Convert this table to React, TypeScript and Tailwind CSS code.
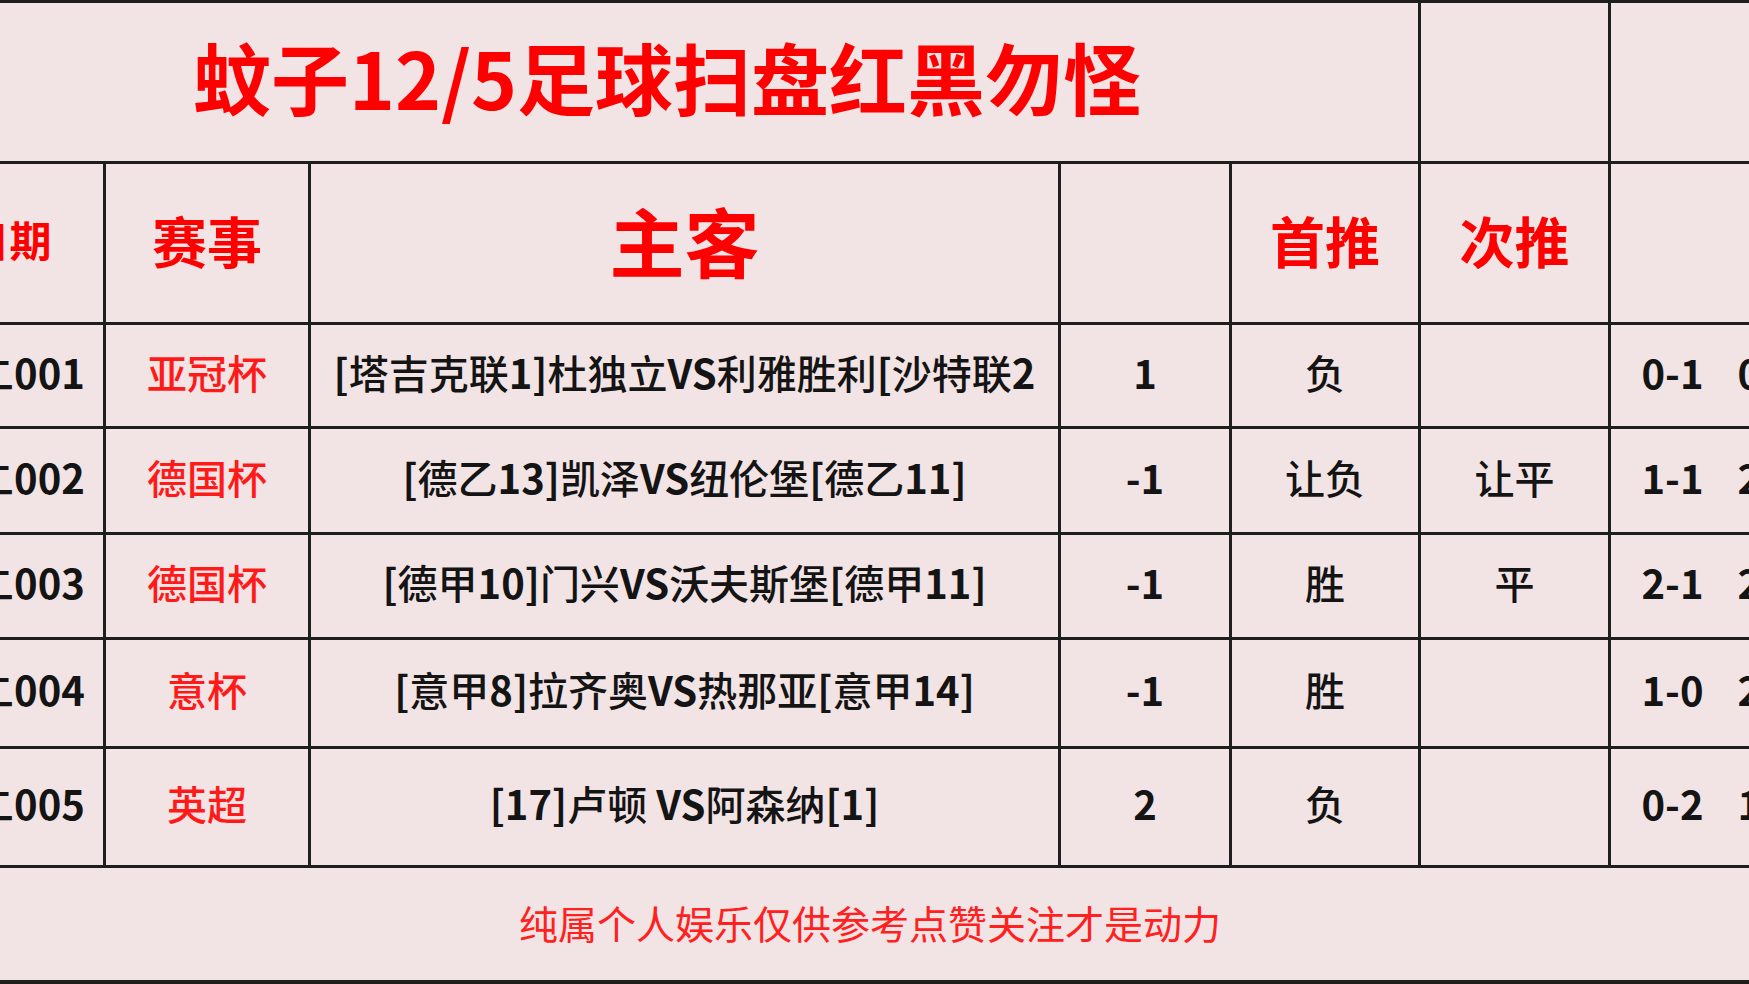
import React from "react";

function Mixed({ text }: { text: string }) {
  const parts = text.split(/([\x00-\x7F]+)/).filter((p) => p.length > 0);
  return (
    <span className="whitespace-pre">
      {parts.map((p, i) =>
        /^[\x00-\x7F]+$/.test(p) ? (
          <span key={i} className="font-bold">
            {p}
          </span>
        ) : (
          <span key={i} className="font-medium">
            {p}
          </span>
        )
      )}
    </span>
  );
}

type Row = {
  id: string;
  league: string;
  teams: string;
  hc: string;
  first: string;
  second: string;
  s1: string;
  s2: string;
  h: string;
};

const rows: Row[] = [
  { id: "周二001", league: "亚冠杯", teams: "[塔吉克联1]杜独立VS利雅胜利[沙特联2", hc: "1", first: "负", second: "", s1: "0-1", s2: "0-2", h: "h-[104px]" },
  { id: "周二002", league: "德国杯", teams: "[德乙13]凯泽VS纽伦堡[德乙11]", hc: "-1", first: "让负", second: "让平", s1: "1-1", s2: "2-2", h: "h-[106px]" },
  { id: "周二003", league: "德国杯", teams: "[德甲10]门兴VS沃夫斯堡[德甲11]", hc: "-1", first: "胜", second: "平", s1: "2-1", s2: "2-0", h: "h-[105px]" },
  { id: "周二004", league: "意杯", teams: "[意甲8]拉齐奥VS热那亚[意甲14]", hc: "-1", first: "胜", second: "", s1: "1-0", s2: "2-0", h: "h-[109px]" },
  { id: "周二005", league: "英超", teams: "[17]卢顿 VS阿森纳[1]", hc: "2", first: "负", second: "", s1: "0-2", s2: "1-3", h: "h-[119px]" },
];

const cell = "flex items-center justify-center border-r-[3px] border-[#1e1e1e] shrink-0 whitespace-nowrap overflow-hidden pb-[8px]";

export default function App() {
  return (
    <div
      className="w-[1749px] h-[984px] overflow-hidden bg-[#f2e3e4]"
      style={{ fontFamily: '"Noto Sans CJK SC", "Noto Sans", sans-serif' }}
    >
      <div className="-ml-[84px] w-[1914px] flex flex-col border-t-[3px] border-[#1e1e1e]">
        {/* Title row */}
        <div className="flex h-[161px] border-b-[3px] border-[#1e1e1e]">
          <div className={`${cell} w-[1505px] text-[78px] font-bold text-[#ff0000] leading-none !pb-[12px]`}>
            蚊子12/5足球扫盘红黑勿怪
          </div>
          <div className={`${cell} w-[190px]`} />
          <div className="flex-1" />
        </div>
        {/* Header row */}
        <div className="flex h-[161px] border-b-[3px] border-[#1e1e1e] text-[#ff0000] font-bold leading-none">
          <div className={`${cell} w-[190px] text-[42px]`}>日期</div>
          <div className={`${cell} w-[205px] text-[55px]`}>赛事</div>
          <div className={`${cell} w-[750px] text-[75px]`}>主客</div>
          <div className={`${cell} w-[171px]`} />
          <div className={`${cell} w-[189px] text-[55px]`}>首推</div>
          <div className={`${cell} w-[190px] text-[55px]`}>次推</div>
          <div className="flex-1" />
        </div>
        {/* Data rows */}
        {rows.map((r) => (
          <div
            key={r.id}
            className={`flex ${r.h} border-b-[3px] border-[#1e1e1e] text-[40px] leading-none text-[#141414]`}
          >
            <div className={`${cell} w-[190px]`}>
              <Mixed text={r.id} />
            </div>
            <div className={`${cell} w-[205px] text-[#ff1a1a] font-medium`}>{r.league}</div>
            <div className={`${cell} w-[750px]`}>
              <Mixed text={r.teams} />
            </div>
            <div className={`${cell} w-[171px]`}>
              <Mixed text={r.hc} />
            </div>
            <div className={`${cell} w-[189px] font-medium`}>{r.first}</div>
            <div className={`${cell} w-[190px] font-medium`}>{r.second}</div>
            <div className="flex-1 flex items-center justify-center gap-[34px] font-bold whitespace-nowrap pb-[8px]">
              <span>{r.s1}</span>
              <span>{r.s2}</span>
            </div>
          </div>
        ))}
        {/* Footer */}
        <div className="flex h-[116px] items-center justify-center border-b-[4px] border-[#1e1e1e] text-[39px] leading-none text-[#ff2020] pb-[4px] pr-[6px]">
          纯属个人娱乐仅供参考点赞关注才是动力
        </div>
      </div>
    </div>
  );
}
